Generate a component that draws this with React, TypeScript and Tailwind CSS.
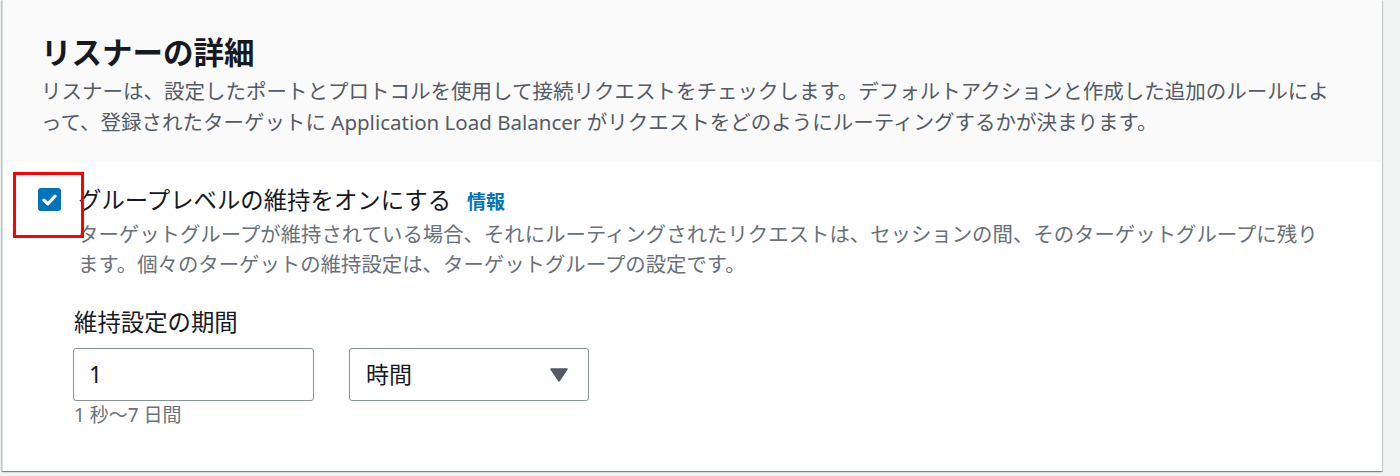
const font = { fontFamily: '"Noto Sans", "Noto Sans CJK JP", sans-serif' };

export default function App() {
  return (
    <div className="min-h-[476px] w-[1400px] bg-[#f2f3f3] pl-[2px]" style={font}>
      <div className="relative w-[1380px] bg-white shadow-[0_1px_1px_0_rgba(0,28,36,0.3),1px_1px_1px_0_rgba(0,28,36,0.15),-1px_1px_1px_0_rgba(0,28,36,0.15)]">
        <div className="border-l border-[#d5dbdb] bg-[#fafafa] px-[38px] pt-[30px] pb-[24px]">
          <h2 className="text-[30.5px] font-bold leading-[44px] text-[#16191f]">リスナーの詳細</h2>
          <p className="mt-[2px] text-[20.5px] leading-[31px] text-[#545b64]">
            リスナーは、設定したポートとプロトコルを使用して接続リクエストをチェックします。デフォルトアクションと作成した追加のルールによ
            <br />
            って、登録されたターゲットに Application Load Balancer がリクエストをどのようにルーティングするかが決まります。
          </p>
        </div>

        <div className="border-l border-[#d5dbdb] pl-[35px] pr-[30px] pt-[22px] pb-[43px]">
          <div className="flex gap-[17px]">
            <div className="pt-[4px]">
              <div className="flex h-[23px] w-[23px] items-center justify-center rounded-[3px] bg-[#0073bb]">
                <svg width="15" height="12" viewBox="0 0 15 12" fill="none">
                  <path d="M2 6.2 L5.8 9.8 L13 2.2" stroke="white" strokeWidth="3.2" strokeLinecap="round" strokeLinejoin="round" />
                </svg>
              </div>
            </div>
            <div>
              <div className="flex items-baseline gap-[16px] leading-[32px]">
                <span className="text-[23.4px] text-[#16191f]">グループレベルの維持をオンにする</span>
                <span className="text-[19px] font-bold text-[#0073bb]">情報</span>
              </div>
              <p className="mt-[1px] text-[20.4px] leading-[30px] text-[#687078]">
                ターゲットグループが維持されている場合、それにルーティングされたリクエストは、セッションの間、そのターゲットグループに残り
                <br />
                ます。個々のターゲットの維持設定は、ターゲットグループの設定です。
              </p>
            </div>
          </div>

          <div className="ml-[35px] mt-[27px]">
            <div className="pl-[1px] text-[23.4px] leading-[32px] text-[#16191f]">維持設定の期間</div>
            <div className="mt-[10px] flex gap-[35px]">
              <div className="flex h-[53px] w-[241px] items-center rounded-[3px] border-[1.5px] border-[#879596] px-[15px] text-[23px] text-[#16191f]">
                1
              </div>
              <div className="flex h-[53px] w-[240px] items-center justify-between rounded-[3px] border-[1.5px] border-[#879596] pl-[16px] pr-[20px] text-[23px] text-[#16191f]">
                <span>時間</span>
                <svg width="18" height="14" viewBox="0 0 18 14">
                  <path d="M1 1 H17 L9 13 Z" fill="#545b64" stroke="#545b64" strokeWidth="1.5" strokeLinejoin="round" />
                </svg>
              </div>
            </div>
            <div className="mt-[1px] pl-[1px] text-[19px] leading-[26px] text-[#687078]">1 秒〜7 日間</div>
          </div>
        </div>

        <div className="pointer-events-none absolute left-[11px] top-[172px] h-[66px] w-[71px] border-[3px] border-[#ff0000]" />
      </div>
    </div>
  );
}
